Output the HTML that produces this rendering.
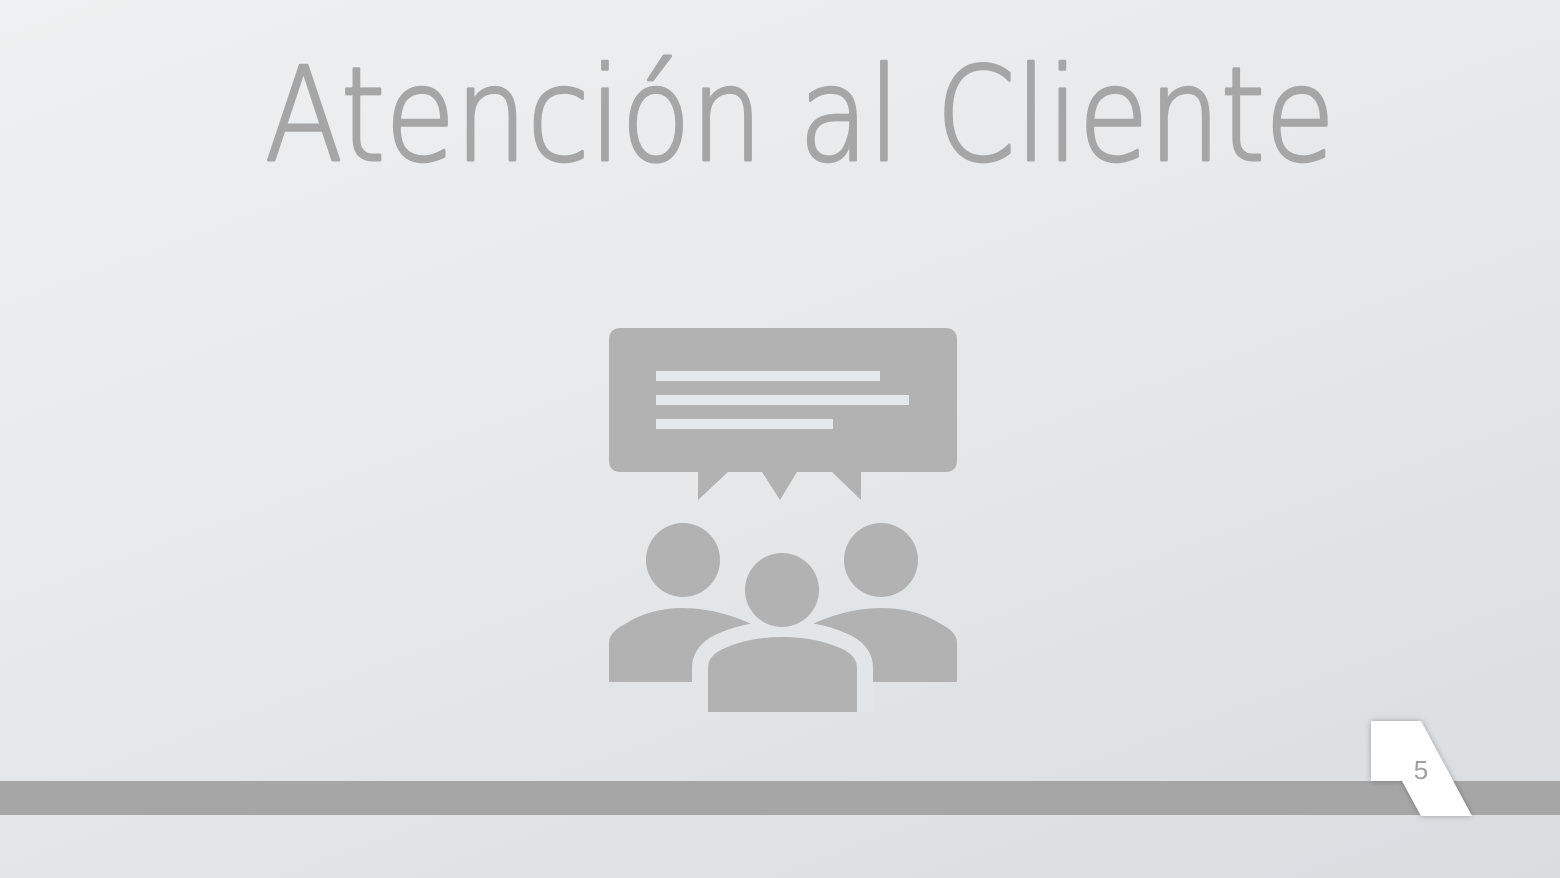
<!DOCTYPE html>
<html><head><meta charset="utf-8"><style>
html,body{margin:0;padding:0;width:1560px;height:878px;overflow:hidden}
body{background:linear-gradient(160deg,#eef0f1 0%,#e6e8ea 50%,#d9dde0 100%);}
</style></head><body>
<svg width="1560" height="878" viewBox="0 0 1560 878" xmlns="http://www.w3.org/2000/svg" style="position:absolute;left:0;top:0">
<defs><filter id="sh" x="-20%" y="-20%" width="140%" height="140%"><feDropShadow dx="0" dy="0" stdDeviation="3" flood-color="#000" flood-opacity="0.3"/></filter>
<clipPath id="cp"><rect x="0" y="0" width="1560" height="712"/></clipPath></defs>
<text x="265" y="160" textLength="1070" lengthAdjust="spacingAndGlyphs" font-family="DejaVu Sans, sans-serif" font-weight="200" font-size="130" fill="#a6a6a6" stroke="#a6a6a6" stroke-width="3" stroke-linejoin="round">Atención al Cliente</text>
<g fill="#b2b2b2">
<path d="M621,328 H945 Q957,328 957,340 V460 Q957,472 945,472 H861 V500 L832,472 H797 L780,500 L762,472 H728 L698,500 V472 H621 Q609,472 609,460 V340 Q609,328 621,328 Z"/>
<circle cx="683" cy="560" r="37"/>
<circle cx="881" cy="560" r="37"/>
<path d="M609,682 V643 Q609,632 625,624 Q650,608 683,608 Q720,608 760,628 L760,682 Z"/>
<path d="M957,682 V643 Q957,632 941,624 Q916,608 881,608 Q844,608 804,628 L804,682 Z"/>
<path clip-path="url(#cp)" d="M708,712 V668 Q708,655 725,648 Q750,637 782,637 Q815,637 840,648 Q857,655 857,668 V712 Z" stroke="#e3e6e8" stroke-width="32" stroke-linejoin="round"/>
<path d="M708,712 V668 Q708,655 725,648 Q750,637 782,637 Q815,637 840,648 Q857,655 857,668 V712 Z"/>
<circle cx="782" cy="590" r="37"/>
</g>
<g fill="#e6e9eb">
<rect x="656" y="371" width="224" height="10"/>
<rect x="656" y="395" width="253" height="10"/>
<rect x="656" y="419" width="177" height="10"/>
</g>
<rect x="0" y="781" width="1560" height="34" fill="#a6a6a6"/>
<polygon points="1371,721 1421,721 1472,816 1421,816 1402,781 1371,781" fill="#fff" filter="url(#sh)"/>
<text x="1421" y="779" text-anchor="middle" font-family="Liberation Sans, sans-serif" font-size="26" fill="#a0a0a0">5</text>
</svg>
</body></html>
